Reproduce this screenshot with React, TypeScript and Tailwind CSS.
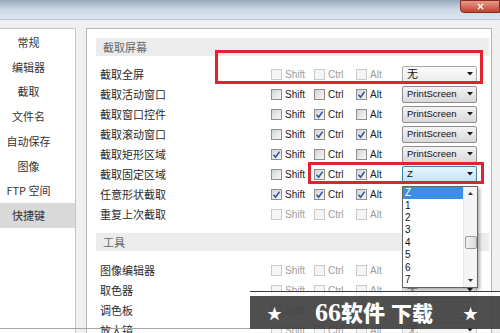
import { X } from "lucide-react";

type Row = {
  label: string;
  shift?: boolean;
  ctrl?: boolean;
  alt?: boolean;
  off?: boolean;
  keyName: string;
  kind: "plain" | "button" | "focus" | "disabled";
};

const captureRows: Row[] = [
  { label: "截取全屏", off: true, keyName: "无", kind: "plain" },
  { label: "截取活动窗口", alt: true, keyName: "PrintScreen", kind: "button" },
  { label: "截取窗口控件", ctrl: true, keyName: "PrintScreen", kind: "button" },
  { label: "截取滚动窗口", ctrl: true, alt: true, keyName: "PrintScreen", kind: "button" },
  { label: "截取矩形区域", shift: true, keyName: "PrintScreen", kind: "button" },
  { label: "截取固定区域", ctrl: true, alt: true, keyName: "Z", kind: "focus" },
  { label: "任意形状截取", shift: true, ctrl: true, alt: true, keyName: "无", kind: "button" },
  { label: "重复上次截取", off: true, keyName: "无", kind: "disabled" },
];

const toolRows: Row[] = [
  { label: "图像编辑器", off: true, keyName: "无", kind: "disabled" },
  { label: "取色器", off: true, keyName: "无", kind: "disabled" },
  { label: "调色板", off: true, keyName: "无", kind: "disabled" },
  { label: "放大镜", off: true, keyName: "无", kind: "disabled" },
];

const navItems = ["常规", "编辑器", "截取", "文件名", "自动保存", "图像", "FTP 空间", "快捷键"];

const latin = { fontFamily: '"Liberation Sans", "Noto Sans", sans-serif' };

function Check({ checked, off }: { checked?: boolean; off?: boolean }) {
  return (
    <span
      className={
        off
          ? "w-[11px] h-[11px] border border-[#cacaca] bg-[#f5f5f5] flex items-center justify-center shrink-0"
          : "w-[11px] h-[11px] border border-[#8e8e8e] bg-gradient-to-br from-[#d4d4d4] to-[#f8f8f8] flex items-center justify-center shrink-0"
      }
    >
      {checked && (
        <svg width="9" height="9" viewBox="0 0 9 9">
          <path d="M1.5 4.8 L3.6 7.2 L7.6 1.6" fill="none" stroke="#31579e" strokeWidth="1.6" />
        </svg>
      )}
    </span>
  );
}

function Arrow() {
  return (
    <svg width="6" height="4" viewBox="0 0 6 4" className="shrink-0">
      <path d="M0 0 L6 0 L3 3.5 Z" fill="#1a1a1a" />
    </svg>
  );
}

function KeySelect({ value, kind }: { value: string; kind: Row["kind"] }) {
  const cls = {
    plain: "border-[#a9a9a9] bg-gradient-to-b from-[#fbfbfb] to-[#ececec] text-[#111]",
    button: "border-[#8e8e8e] bg-gradient-to-b from-[#f3f3f3] to-[#d9d9d9] text-[#111]",
    focus: "border-[#3c7fb1] bg-gradient-to-b from-[#eaf6fd] to-[#bfe3f7] text-[#111]",
    disabled: "border-[#c9c9c9] bg-[#f4f4f4] text-[#8a8a8a]",
  }[kind];
  return (
    <div className={`w-[75px] h-[17px] border rounded-[2px] flex items-center pl-[4px] pr-[3px] ${cls}`}>
      <span className="flex-1 text-[9.5px] leading-none" style={latin}>
        {value === "无" ? <span className="text-[11px]" style={{ fontFamily: '"Noto Sans CJK SC", sans-serif' }}>无</span> : value}
      </span>
      <Arrow />
    </div>
  );
}

function HotkeyRow({ row }: { row: Row }) {
  const mod = row.off ? "text-[#9d9d9d]" : "text-[#1c1c1c]";
  return (
    <div className="h-[20px] flex items-center pl-[13px]">
      <span className="w-[171px] text-[11px] text-[#2a2a2a]">{row.label}</span>
      <div className="w-[43px] flex items-center gap-[3px]">
        <Check checked={row.shift} off={row.off} />
        <span className={`text-[10px] ${mod}`} style={latin}>Shift</span>
      </div>
      <div className="w-[42px] flex items-center gap-[3px]">
        <Check checked={row.ctrl} off={row.off} />
        <span className={`text-[10px] ${mod}`} style={latin}>Ctrl</span>
      </div>
      <div className="w-[46px] flex items-center gap-[3px]">
        <Check checked={row.alt} off={row.off} />
        <span className={`text-[10px] ${mod}`} style={latin}>Alt</span>
      </div>
      <KeySelect value={row.keyName} kind={row.kind} />
    </div>
  );
}

function SectionHeader({ title }: { title: string }) {
  return (
    <div className="ml-[9px] mr-[2px] h-[18px] bg-[#ececec] flex items-center pl-[7px] text-[11px] text-[#666]">
      {title}
    </div>
  );
}

export default function App() {
  const options = ["Z", "1", "2", "3", "4", "5", "6", "7"];

  return (
    <div
      className="relative w-[500px] h-[333px] overflow-hidden bg-[#f0f0f0] flex flex-col"
      style={{ fontFamily: '"Noto Sans CJK SC", "Noto Sans", sans-serif' }}
    >
      {/* glass title bar */}
      <div className="h-[20px] shrink-0 flex bg-gradient-to-b from-[#98a9bc] via-[#cbd8e6] to-[#dde6ef] border-b border-[#b7c3cf]">
        <div className="ml-auto w-[40px] h-[13px] rounded-bl-[4px] bg-gradient-to-b from-[#e59a8c] to-[#c2402c] border border-[#8a2b1f] flex items-center justify-center">
          <X className="w-[9px] h-[9px] text-white" strokeWidth={3.5} />
        </div>
      </div>

      <div className="flex flex-1 pt-[8px] min-h-0">
        {/* nav */}
        <div className="w-[76px] shrink-0 bg-white border-t border-r border-[#c6c6c6] pt-[1px]">
          {navItems.map((item) => (
            <div
              key={item}
              className={`h-[24.7px] flex items-center ${item === "快捷键" ? "bg-[#d9d9d9]" : ""}`}
            >
              <span className="w-[57px] text-center text-[11px] text-[#333]">{item}</span>
            </div>
          ))}
        </div>

        {/* main panel */}
        <div className="ml-[10px] w-[406px] bg-white border-t border-l border-r border-[#b5b5b5] pt-[9px]">
          <SectionHeader title="截取屏幕" />
          <div className="mt-[8px]">
            {captureRows.map((r) => (
              <HotkeyRow key={r.label} row={r} />
            ))}
          </div>
          <div className="mt-[9px]">
            <SectionHeader title="工具" />
          </div>
          <div className="mt-[9px]">
            {toolRows.map((r) => (
              <HotkeyRow key={r.label} row={r} />
            ))}
          </div>
        </div>
      </div>

      {/* open dropdown list */}
      <div className="absolute left-[402px] top-[186px] w-[76px] h-[102px] bg-white border border-[#646464] flex shadow-[2px_2px_3px_rgba(0,0,0,0.3)]">
        <div className="w-[60px]">
          {options.map((o, i) => (
            <div
              key={o}
              className={`h-[12.4px] flex items-center pl-[2px] text-[10px] leading-none ${i === 0 ? "bg-[#3b8fe5] text-white" : "text-[#111]"}`}
              style={latin}
            >
              {o}
            </div>
          ))}
        </div>
        <div className="flex-1 bg-[#f4f4f4] border-l border-[#e6e6e6] flex flex-col items-center">
          <div className="h-[13px] flex items-center">
            <svg width="5" height="3" viewBox="0 0 5 3">
              <path d="M0 3 L5 3 L2.5 0 Z" fill="#333" />
            </svg>
          </div>
          <div className="mt-[36px] w-[12px] h-[13px] rounded-[2px] border border-[#9a9a9a] bg-gradient-to-r from-[#f2f2f2] to-[#dadada]" />
          <div className="mt-auto h-[13px] flex items-center">
            <svg width="5" height="3" viewBox="0 0 5 3">
              <path d="M0 0 L5 0 L2.5 3 Z" fill="#333" />
            </svg>
          </div>
        </div>
      </div>

      {/* red annotation boxes */}
      <div className="absolute left-[215px] top-[50px] w-[268px] h-[34px] border-[3px] border-[#e2232e]" />
      <div className="absolute left-[308px] top-[162px] w-[176px] h-[22px] border-[3px] border-[#e2232e]" />

      {/* bottom rule */}
      <div className="absolute left-0 top-[328px] w-[250px] h-px bg-[#a5a5a5]" />

      {/* watermark banner */}
      <div className="absolute left-[250px] top-[291px] right-0">
        <div className="h-px bg-[#3a3a3a]" />
        <div className="h-[4px] bg-white/80" />
        <div className="h-[33px] bg-[#3c3c3c]/90 flex items-center text-white">
          <span className="ml-[17px] text-[15px] leading-none">★</span>
          <span className="ml-[33px] flex items-baseline font-bold">
            <span className="text-[26px] leading-none" style={{ fontFamily: '"Liberation Serif", serif' }}>66</span>
            <span className="text-[22px] leading-none font-black">软件</span>
            <span className="ml-[6px] text-[21px] leading-none font-black">下载</span>
          </span>
          <span className="ml-auto mr-[22px] text-[15px] leading-none">★</span>
        </div>
      </div>
    </div>
  );
}
